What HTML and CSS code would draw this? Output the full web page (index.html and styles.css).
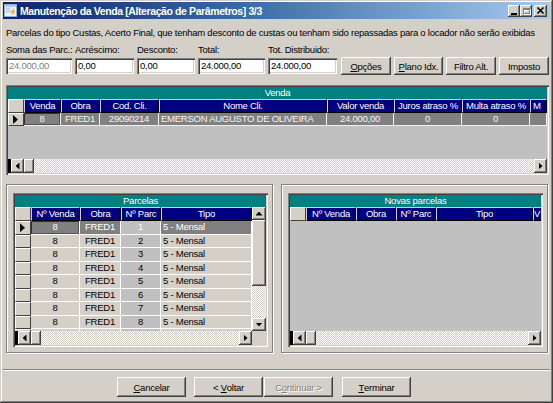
FILE: index.html
```html
<!DOCTYPE html>
<html lang="pt-BR">
<head>
<meta charset="utf-8">
<title>Manutenção da Venda</title>
<link rel="stylesheet" href="styles.css">
</head>
<body>
<div class="window">
  <div class="titlebar">
    <svg class="app-icon" viewBox="0 0 14 14" width="13" height="13">
      <rect x="0.5" y="0.5" width="13" height="13" fill="#eef4fc" stroke="#8fb0dc"/>
      <rect x="1" y="1" width="12" height="2" fill="#a9c7ee"/>
      <rect x="2" y="4" width="5" height="1" fill="#9fb8dc"/>
      <rect x="2" y="6" width="5" height="1" fill="#9fb8dc"/>
      <rect x="2" y="8" width="5" height="1" fill="#9fb8dc"/>
      <path d="M10 4 L11 7 L13 7.5 L11 9 L11.5 12 L9.5 10 L7.5 12 L8 9 L6.5 7.5 L9 7 Z" fill="#f2b13c"/>
    </svg>
    <span class="title">Manutenção da Venda [Alteração de Parâmetros] 3/3</span>
    <div class="caption-buttons">
      <span class="cap cap-min"><svg viewBox="0 0 12 12" width="12" height="12"><rect x="3" y="8" width="6" height="2" fill="#000"/></svg></span>
      <span class="cap cap-max"><svg viewBox="0 0 12 12" width="12" height="12"><path d="M4 4h7v6H4z M5 6v3h5V6z" fill="#fff" fill-rule="evenodd"/><path d="M3 3h7v6H3z M4 5v3h5V5z" fill="#808080" fill-rule="evenodd"/></svg></span>
      <span class="cap cap-close"><svg viewBox="0 0 13 12" width="13" height="12"><path d="M3.5 2.5 L9.5 8.5 M9.5 2.5 L3.5 8.5" stroke="#000" stroke-width="1.7"/></svg></span>
    </div>
  </div>

  <div class="content">
    <p class="info">Parcelas do tipo Custas, Acerto Final, que tenham desconto de custas ou tenham sido repassadas para o locador não serão exibidas</p>

    <div class="fields">
      <div class="field w-soma"><span class="lbl">Soma das Parc.:</span><span class="input disabled">24.000,00</span></div>
      <div class="field w-acres"><span class="lbl">Acréscimo:</span><span class="input">0,00</span></div>
      <div class="field w-desc"><span class="lbl">Desconto:</span><span class="input">0,00</span></div>
      <div class="field w-total"><span class="lbl">Total:</span><span class="input">24.000,00</span></div>
      <div class="field w-dist"><span class="lbl">Tot. Distribuido:</span><span class="input">24.000,00</span></div>
      <div class="tool-buttons">
        <span class="btn tb"><u>O</u>pções</span>
        <span class="btn tb tb-narrow"><u>P</u>lano Idx.</span>
        <span class="btn tb">Filtro Alt.</span>
        <span class="btn tb">Imposto</span>
      </div>
    </div>

    <div class="grid venda-grid">
      <div class="grid-title">Venda</div>
      <div class="grid-clip">
        <div class="grid-row head">
          <span class="ind"></span>
          <span class="hc">Venda</span>
          <span class="hc">Obra</span>
          <span class="hc">Cod. Cli.</span>
          <span class="hc">Nome Cli.</span>
          <span class="hc">Valor venda</span>
          <span class="hc">Juros atraso %</span>
          <span class="hc">Multa atraso %</span>
          <span class="hc hc-last">M</span>
        </div>
        <div class="grid-row data">
          <span class="ind"><i class="cur"></i></span>
          <span class="dc focus">8</span>
          <span class="dc">FRED1</span>
          <span class="dc">29090214</span>
          <span class="dc left">EMERSON AUGUSTO DE OLIVEIRA</span>
          <span class="dc">24.000,00</span>
          <span class="dc">0</span>
          <span class="dc">0</span>
          <span class="dc"></span>
        </div>
      </div>
      <div class="grid-empty"></div>
      <div class="hscroll">
        <span class="sb-black"></span>
        <span class="sb-btn"><i class="arr-l"></i></span>
        <span class="sb-thumb"></span>
        <span class="sb-track"></span>
        <span class="sb-btn"><i class="arr-r"></i></span>
      </div>
    </div>

    <div class="panels">
      <div class="groupbox">
        <div class="grid parc-grid">
          <div class="grid-title">Parcelas</div>
          <div class="grid-main">
            <div class="grid-table">
              <div class="grid-row head">
                <span class="ind"></span>
                <span class="hc">Nº Venda</span>
                <span class="hc">Obra</span>
                <span class="hc">Nº Parc</span>
                <span class="hc">Tipo</span>
              </div>
              <div class="grid-row prow sel">
                <span class="ind"><i class="cur"></i></span>
                <span class="pc dark focus">8</span>
                <span class="pc dark">FRED1</span>
                <span class="pc silver">1</span>
                <span class="pc dark left">5 - Mensal</span>
              </div>
              <div class="grid-row prow">
                <span class="ind"></span>
                <span class="pc">8</span><span class="pc">FRED1</span><span class="pc silver">2</span><span class="pc left">5 - Mensal</span>
              </div>
              <div class="grid-row prow">
                <span class="ind"></span>
                <span class="pc">8</span><span class="pc">FRED1</span><span class="pc silver">3</span><span class="pc left">5 - Mensal</span>
              </div>
              <div class="grid-row prow">
                <span class="ind"></span>
                <span class="pc">8</span><span class="pc">FRED1</span><span class="pc silver">4</span><span class="pc left">5 - Mensal</span>
              </div>
              <div class="grid-row prow">
                <span class="ind"></span>
                <span class="pc">8</span><span class="pc">FRED1</span><span class="pc silver">5</span><span class="pc left">5 - Mensal</span>
              </div>
              <div class="grid-row prow">
                <span class="ind"></span>
                <span class="pc">8</span><span class="pc">FRED1</span><span class="pc silver">6</span><span class="pc left">5 - Mensal</span>
              </div>
              <div class="grid-row prow">
                <span class="ind"></span>
                <span class="pc">8</span><span class="pc">FRED1</span><span class="pc silver">7</span><span class="pc left">5 - Mensal</span>
              </div>
              <div class="grid-row prow">
                <span class="ind"></span>
                <span class="pc">8</span><span class="pc">FRED1</span><span class="pc silver">8</span><span class="pc left">5 - Mensal</span>
              </div>
              <div class="grid-row prow last">
                <span class="ind"></span>
                <span class="pc"></span><span class="pc"></span><span class="pc silver"></span><span class="pc left"></span>
              </div>
            </div>
            <div class="vscroll">
              <span class="sb-btn v"><i class="arr-u"></i></span>
              <span class="sb-thumb v"></span>
              <span class="sb-track"></span>
              <span class="sb-btn v"><i class="arr-d"></i></span>
            </div>
          </div>
          <div class="hscroll">
            <span class="sb-black"></span>
            <span class="sb-btn"><i class="arr-l"></i></span>
            <span class="sb-thumb"></span>
            <span class="sb-track"></span>
            <span class="sb-btn"><i class="arr-r"></i></span>
            <span class="sb-corner"></span>
          </div>
        </div>
      </div>

      <div class="groupbox">
        <div class="grid novas-grid">
          <div class="grid-title">Novas parcelas</div>
          <div class="grid-clip">
            <div class="grid-row head">
              <span class="ind"></span>
              <span class="hc">Nº Venda</span>
              <span class="hc">Obra</span>
              <span class="hc">Nº Parc</span>
              <span class="hc">Tipo</span>
              <span class="hc hc-last hc-tight">V</span>
            </div>
          </div>
          <div class="grid-empty"></div>
          <div class="hscroll">
            <span class="sb-black"></span>
            <span class="sb-btn"><i class="arr-l"></i></span>
            <span class="sb-thumb"></span>
            <span class="sb-track"></span>
            <span class="sb-btn"><i class="arr-r"></i></span>
          </div>
        </div>
      </div>
    </div>
  </div>

  <div class="separator"></div>

  <div class="wizard-buttons">
    <span class="btn wb wb-cancel"><u>C</u>ancelar</span>
    <span class="btn wb wb-back">&lt;&nbsp;<u>V</u>oltar</span>
    <span class="btn wb wb-next disabled">C<u>o</u>ntinuar&nbsp;&gt;</span>
    <span class="btn wb wb-finish"><u>T</u>erminar</span>
  </div>
</div>
</body>
</html>
```

FILE: styles.css
```css
* { box-sizing: border-box; margin: 0; padding: 0; }

html, body {
  width: 553px;
  height: 403px;
  overflow: hidden;
}

body {
  background: #d4d0c8;
  font-family: "Liberation Sans", Arial, sans-serif;
  font-size: 9.5px;
  letter-spacing: -0.25px;
  color: #000;
}

u { text-decoration: underline; text-underline-offset: 1px; }

/* ---------- window frame ---------- */
.window {
  width: 553px;
  height: 403px;
  padding: 2px 3px 3px 3px;
  background: #d4d0c8;
  display: flex;
  flex-direction: column;
  overflow: hidden;
  box-shadow:
    inset -1px -1px #404040,
    inset 1px 1px #d4d0c8,
    inset -2px -2px #808080,
    inset 2px 2px #ffffff;
}

.titlebar {
  height: 17px;
  flex: none;
  display: flex;
  align-items: center;
  padding-left: 1px;
  background: linear-gradient(to right, #0a246a 0%, #3a6ea5 45%, #a6caf0 100%);
}

.app-icon { flex: none; margin-right: 3px; }

.title {
  flex: 1;
  min-width: 0;
  color: #fff;
  font-weight: bold;
  font-size: 10.5px;
  letter-spacing: -0.4px;
  white-space: nowrap;
  overflow: hidden;
}

.caption-buttons {
  display: flex;
  align-items: center;
  padding-right: 3px;
}

.cap {
  display: block;
  width: 12px;
  height: 12px;
  background: #d4d0c8;
  box-shadow:
    inset -1px -1px #404040,
    inset 1px 1px #ffffff,
    inset -2px -2px #808080;
}
.cap svg { display: block; }
.cap-close { width: 13px; margin-left: 2px; }

/* ---------- content ---------- */
.content {
  flex: none;
  width: 547px;
  padding: 0 1px 0 3px;
  display: flex;
  flex-direction: column;
}

.info {
  margin-top: 8px;
  line-height: 12px;
  white-space: nowrap;
}

.fields {
  margin-top: 5px;
  display: flex;
  align-items: flex-end;
}

.field {
  display: flex;
  flex-direction: column;
  flex: none;
  margin-right: 3px;
}
.lbl { line-height: 12px; white-space: nowrap; margin-bottom: 2px; }
.w-soma  { width: 66px; }
.w-acres { width: 59px; }
.w-desc  { width: 58px; }
.w-total { width: 67px; }
.w-dist  { width: 69px; margin-right: 0; }

.input {
  display: block;
  height: 16px;
  line-height: 16px;
  padding-left: 3px;
  background: #fff;
  white-space: nowrap;
  box-shadow:
    inset 1px 1px #808080,
    inset 2px 2px #404040,
    inset -1px -1px #ffffff,
    inset -2px -2px #d4d0c8;
}
.input.disabled { color: #808080; }

.btn {
  display: flex;
  align-items: center;
  justify-content: center;
  flex: none;
  background: #d4d0c8;
  white-space: nowrap;
  box-shadow:
    inset -1px -1px #404040,
    inset 1px 1px #ffffff,
    inset -2px -2px #808080;
}
.btn.disabled {
  color: #808080;
  text-shadow: 1px 1px #fff;
}

.tool-buttons {
  display: flex;
  gap: 3px;
  margin-left: 4px;
  margin-bottom: -1px;
}
.tb { width: 50px; height: 18px; }
.tb-narrow { width: 49px; }

/* ---------- grids ---------- */
.grid {
  padding: 2px;
  background: #c0c0c0;
  display: flex;
  flex-direction: column;
  overflow: hidden;
  min-width: 0;
  box-shadow:
    inset 1px 1px #808080,
    inset 2px 2px #404040,
    inset -1px -1px #ffffff,
    inset -2px -2px #d4d0c8;
}

.grid-title {
  flex: none;
  height: 12px;
  line-height: 12px;
  background: #008080;
  color: #fff;
  text-align: center;
  white-space: nowrap;
}

.grid-clip {
  flex: none;
  overflow: hidden;
  min-width: 0;
}

.grid-row {
  display: grid;
  overflow: hidden;
}
.grid-row > span {
  display: block;
  overflow: hidden;
  white-space: nowrap;
}

.head { height: 14px; }
.head .hc {
  background: #000080;
  color: #fff;
  text-align: center;
  line-height: 12px;
  border-top: 1px solid #d4d0c8;
  border-left: 1px solid #d4d0c8;
  border-right: 1px solid #000;
  border-bottom: 1px solid #000;
}
.head .hc-last { text-align: left; padding-left: 2px; }
.head .hc-tight { padding-left: 0; border-right: 0; letter-spacing: -0.5px; }

.ind {
  background: #d4d0c8;
  border-top: 1px solid #fff;
  border-left: 1px solid #fff;
  border-right: 1px solid #404040;
  border-bottom: 1px solid #404040;
  display: flex !important;
  align-items: center;
  padding-left: 4px;
}
.cur {
  display: block;
  width: 5px;
  height: 9px;
  background: #000;
  clip-path: polygon(0 0, 100% 50%, 0 100%);
}

.venda-grid {
  width: 543px;
  height: 90px;
  margin-top: 11px;
}
.venda-grid .grid-row {
  width: 539px;
  grid-template-columns: 16px 37px 39px 59px 168px 67px 68px 68px 17px;
}
.venda-grid .data { height: 13px; }
.dc {
  background: #808080;
  color: #f4f4f4;
  text-align: center;
  line-height: 12px;
  border-right: 1px solid #f0f0f0;
  border-bottom: 1px solid #f0f0f0;
}
.dc.left { text-align: left; padding-left: 2px; }
.focus { box-shadow: inset 1px 1px #303030, inset -1px -1px #505050; }

.grid-empty { flex: 1; background: #c0c0c0; }

/* lower panels */
.panels {
  margin-top: 9px;
  width: 543px;
  height: 169px;
  display: flex;
  gap: 8px;
}
.groupbox {
  flex: none;
  width: 267px;
  padding: 8px 4px 5px 6px;
  border: 1px solid #808080;
  box-shadow: inset 1px 1px #fff, 1px 1px #fff;
  display: flex;
}
.groupbox .grid { flex: 1; }

.grid-main {
  flex: 1;
  display: flex;
  overflow: hidden;
  min-height: 0;
}
.grid-table {
  flex: 1;
  min-width: 0;
  overflow: hidden;
  background: #c0c0c0;
}

.parc-grid .grid-row {
  grid-template-columns: 16px 49px 41px 40px 91px;
}
.prow { height: 13.5px; }
.pc {
  background: #d4d0c8;
  text-align: center;
  line-height: 12px;
  border-right: 1px solid #fff;
  border-bottom: 1px solid #fff;
}
.pc.left { text-align: left; padding-left: 2px; }
.pc.silver { background: #c0c0c0; }
.pc.dark { background: #808080; color: #fff; }
.sel .pc.silver { color: #fff; }

.novas-grid .grid-row {
  grid-template-columns: 16px 50px 40px 40px 97px 1fr;
}

/* scrollbars */
.hscroll {
  flex: none;
  height: 14px;
  display: flex;
  background: #d4d0c8;
}
.vscroll {
  flex: none;
  width: 14px;
  display: flex;
  flex-direction: column;
}
.sb-black { width: 3px; background: #000; flex: none; }
.sb-btn {
  flex: none;
  width: 13px;
  display: flex;
  align-items: center;
  justify-content: center;
  background: #d4d0c8;
  box-shadow:
    inset -1px -1px #404040,
    inset 1px 1px #ffffff,
    inset -2px -2px #808080;
}
.sb-btn.v { width: auto; height: 13px; }
.sb-thumb {
  flex: none;
  width: 10px;
  background: #d4d0c8;
  box-shadow:
    inset -1px -1px #404040,
    inset 1px 1px #ffffff,
    inset -2px -2px #808080;
}
.sb-thumb.v { width: auto; height: 66px; }
.sb-track {
  flex: 1;
  background: repeating-conic-gradient(#ffffff 0 25%, #d4d0c8 0 50%) 0 0 / 2px 2px;
}
.sb-corner { flex: none; width: 14px; background: #d4d0c8; }

.arr-l, .arr-r { display: block; width: 4px; height: 7px; background: #000; }
.arr-l { clip-path: polygon(100% 0, 0 50%, 100% 100%); }
.arr-r { clip-path: polygon(0 0, 100% 50%, 0 100%); }
.arr-u, .arr-d { display: block; width: 7px; height: 4px; background: #000; }
.arr-u { clip-path: polygon(50% 0, 100% 100%, 0 100%); }
.arr-d { clip-path: polygon(0 0, 100% 0, 50% 100%); }

/* bottom */
.separator {
  flex: none;
  margin-top: 16px;
  height: 2px;
  border-top: 1px solid #808080;
  border-bottom: 1px solid #ffffff;
}

.wizard-buttons {
  flex: none;
  margin-top: 6px;
  height: 20px;
  display: flex;
  padding-left: 114px;
}
.wb { width: 69px; height: 20px; }
.wb-back { margin-left: 8px; }
.wb-next { margin-left: 1px; }
.wb-finish { margin-left: 9px; }
```
